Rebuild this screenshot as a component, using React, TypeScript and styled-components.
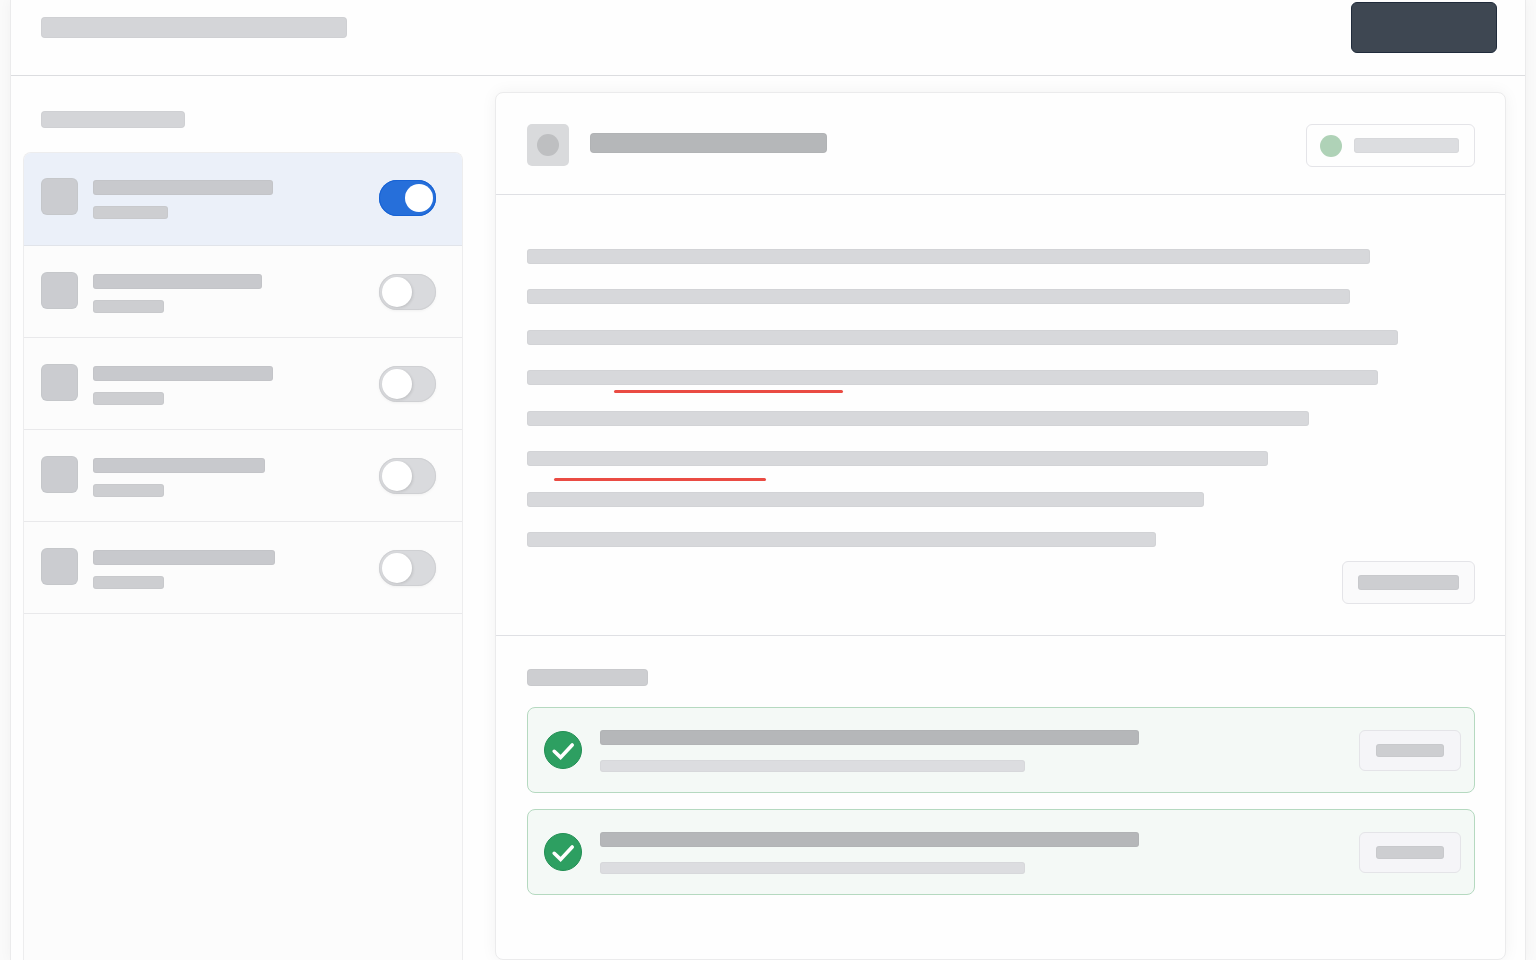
import React, { useState } from "react";
import styled, { createGlobalStyle } from "styled-components";

const GlobalStyle = createGlobalStyle`
  *, *::before, *::after { box-sizing: border-box; }
  body {
    margin: 0;
    background: #fafafa;
    font-family: "Inter", "Liberation Sans", sans-serif;
  }
`;

const tones = {
  light: "#dcdde0",
  line: "#d7d8db",
  base: "#d4d5d8",
  medium: "#cdced1",
  strong: "#c8c9cd",
  dark: "#b5b7b9",
};

const Bar = styled.span<{ $w: number; $h: number; $tone?: keyof typeof tones }>`
  display: block;
  flex: none;
  width: ${(p) => p.$w}px;
  max-width: 100%;
  height: ${(p) => p.$h}px;
  border-radius: ${(p) => (p.$h > 16 ? 4 : 3)}px;
  background: ${(p) => tones[p.$tone ?? "base"]};
  box-shadow: inset 0 0 0 1px rgba(60, 64, 72, 0.03);
`;

const Frame = styled.div`
  display: flex;
  flex-direction: column;
  min-height: 100vh;
  margin: 0 10px;
  border: solid #ebebec;
  border-width: 0 1px;
  background: #fefefe;
  box-shadow: 0 0 12px rgba(0, 0, 0, 0.04);
`;

const TopBar = styled.header`
  display: flex;
  align-items: center;
  justify-content: space-between;
  padding: 2px 28px 22px 30px;
  border-bottom: 1px solid #dcdde0;
`;

const PrimaryButton = styled.button`
  width: 146px;
  height: 51px;
  border: 1px solid #202b3b;
  border-radius: 6px;
  background: #3e4752;
  cursor: pointer;
`;

const Content = styled.div`
  flex: 1;
  display: grid;
  grid-template-columns: 440px minmax(0, 1fr);
  gap: 32px;
  padding: 0 19px 0 12px;
`;

const Sidebar = styled.aside`
  display: flex;
  flex-direction: column;
`;

const SidebarTitle = styled.div`
  padding: 35px 18px 24px;
`;

const List = styled.ul`
  flex: 1;
  margin: 0;
  padding: 0;
  list-style: none;
  border: 1px solid #ededee;
  border-bottom: 0;
  border-radius: 8px 8px 0 0;
  background: #fcfcfc;
  overflow: hidden;
`;

const Row = styled.li<{ $active?: boolean }>`
  display: flex;
  align-items: flex-start;
  gap: 15px;
  padding: ${(p) => (p.$active ? 25 : 26)}px 26px ${(p) => (p.$active ? 26 : 24)}px 17px;
  border-bottom: 1px solid ${(p) => (p.$active ? "#e1e4ea" : "#e9e9eb")};
  background: ${(p) => (p.$active ? "#ebf0f9" : "transparent")};
`;

const RowIcon = styled.span`
  flex: none;
  width: 37px;
  height: 37px;
  border-radius: 6px;
  background: #cbccd0;
  box-shadow: inset 0 0 0 1px rgba(60, 64, 72, 0.04);
`;

const RowText = styled.div`
  flex: 1;
  display: grid;
  gap: 11px;
  padding-top: 2px;
`;

const Toggle = styled.input`
  appearance: none;
  flex: none;
  width: 57px;
  height: 36px;
  margin: 2px 0 0;
  padding: 3px;
  border-radius: 18px;
  background: #d9dadd;
  box-shadow: inset 0 0 0 1px #cfd0d3, 0 1px 3px rgba(0, 0, 0, 0.05);
  cursor: pointer;

  &::before {
    content: "";
    display: block;
    width: 30px;
    height: 30px;
    border-radius: 50%;
    background: #fff;
    box-shadow: 1px 1px 3px rgba(0, 0, 0, 0.12);
  }

  &:checked {
    padding: 4px;
    background: #266fda;
    box-shadow: inset 0 0 0 1px #1762d4;
  }

  &:checked::before {
    width: 28px;
    height: 28px;
    margin-left: 22px;
    box-shadow: none;
  }
`;

const Panel = styled.main`
  display: flex;
  flex-direction: column;
  margin-top: 16px;
  border: 1px solid #ebebec;
  border-radius: 8px;
  background: #fefefe;
  box-shadow: 0 0 16px rgba(0, 0, 0, 0.05);
`;

const PanelHeader = styled.div`
  display: flex;
  align-items: flex-start;
  gap: 21px;
  padding: 31px 30px 27px 31px;
  border-bottom: 1px solid #dfe0e4;
`;

const Avatar = styled.span`
  display: grid;
  place-items: center;
  flex: none;
  width: 42px;
  height: 42px;
  border-radius: 5px;
  background: #d9dadc;

  &::before {
    content: "";
    width: 22px;
    height: 22px;
    border-radius: 50%;
    background: #bebfc1;
  }
`;

const PanelTitle = styled.div`
  flex: 1;
  padding-top: 9px;
`;

const Status = styled.div`
  display: flex;
  align-items: center;
  gap: 12px;
  height: 43px;
  padding: 0 15px 0 13px;
  border: 1px solid #e4e4e8;
  border-radius: 6px;
`;

const Dot = styled.span`
  width: 22px;
  height: 22px;
  border-radius: 50%;
  background: #afd2b7;
`;

const Editor = styled.section`
  display: flex;
  flex-direction: column;
  padding: 54px 30px 31px 31px;
  border-bottom: 1px solid #dfe0e4;
`;

const Lines = styled.div`
  display: flex;
  flex-direction: column;
  justify-content: space-between;
  min-height: 298px;
`;

const Line = styled.div`
  position: relative;
`;

const Underline = styled.span<{ $x: number; $y: number; $w: number }>`
  position: absolute;
  left: ${(p) => p.$x}px;
  top: ${(p) => p.$y}px;
  width: ${(p) => p.$w}px;
  height: 3px;
  border-radius: 2px;
  background: #ea4b43;
`;

const GhostButton = styled.button<{ $small?: boolean }>`
  display: flex;
  align-items: center;
  justify-content: center;
  flex: none;
  align-self: ${(p) => (p.$small ? "center" : "flex-end")};
  height: ${(p) => (p.$small ? 41 : 43)}px;
  margin-top: ${(p) => (p.$small ? 0 : 14)}px;
  padding: 0 ${(p) => (p.$small ? 16 : 15)}px;
  border: 1px solid #e4e4e8;
  border-radius: 6px;
  background: ${(p) => (p.$small ? "#f5f5f8" : "#fafafb")};
  cursor: pointer;
`;

const Results = styled.section`
  display: flex;
  flex-direction: column;
  gap: 16px;
  padding: 33px 30px 64px 31px;
`;

const ResultsTitle = styled.div`
  padding-bottom: 5px;
`;

const Card = styled.article`
  display: flex;
  align-items: center;
  gap: 18px;
  height: 86px;
  padding: 0 13px 0 16px;
  border: 1px solid #b5d9c0;
  border-radius: 8px;
  background: #f4f9f6;
`;

const CardText = styled.div`
  flex: 1;
  min-width: 0;
  display: grid;
  gap: 15px;
  margin-top: 2px;
`;

const CheckIcon = () => (
  <svg width="38" height="38" viewBox="0 0 38 38" aria-hidden="true">
    <circle cx="19" cy="19" r="18.5" fill="#2d9f61" stroke="#218f53" />
    <path
      d="M10.2 20.3 L16.6 26.4 L28.2 14"
      fill="none"
      stroke="#fff"
      strokeWidth="3.6"
      strokeLinecap="round"
      strokeLinejoin="miter"
    />
  </svg>
);

const rows = [
  { title: 180, sub: 75, on: true },
  { title: 169, sub: 71, on: false },
  { title: 180, sub: 71, on: false },
  { title: 172, sub: 71, on: false },
  { title: 182, sub: 71, on: false },
];

const lines: { w: number; mark?: { x: number; y: number; w: number } }[] = [
  { w: 843 },
  { w: 823 },
  { w: 871 },
  { w: 851, mark: { x: 87, y: 20, w: 229 } },
  { w: 782 },
  { w: 741, mark: { x: 27, y: 27, w: 212 } },
  { w: 677 },
  { w: 629 },
];

export default function App() {
  const [enabled, setEnabled] = useState(rows.map((r) => r.on));
  const flip = (i: number) =>
    setEnabled((prev) => prev.map((v, n) => (n === i ? !v : v)));

  return (
    <>
      <GlobalStyle />
      <Frame>
        <TopBar>
          <Bar $w={306} $h={21} />
          <PrimaryButton type="button" aria-label="Primary action" />
        </TopBar>
        <Content>
          <Sidebar>
            <SidebarTitle>
              <Bar $w={144} $h={17} />
            </SidebarTitle>
            <List>
              {rows.map((row, i) => (
                <Row key={i} $active={i === 0}>
                  <RowIcon />
                  <RowText>
                    <Bar $w={row.title} $h={15} $tone="strong" />
                    <Bar $w={row.sub} $h={13} $tone="medium" />
                  </RowText>
                  <Toggle
                    type="checkbox"
                    role="switch"
                    aria-label={`Option ${i + 1}`}
                    checked={enabled[i]}
                    onChange={() => flip(i)}
                  />
                </Row>
              ))}
            </List>
          </Sidebar>
          <Panel>
            <PanelHeader>
              <Avatar />
              <PanelTitle>
                <Bar $w={237} $h={20} $tone="dark" />
              </PanelTitle>
              <Status>
                <Dot />
                <Bar $w={105} $h={15} $tone="light" />
              </Status>
            </PanelHeader>
            <Editor>
              <Lines>
                {lines.map((line, i) => (
                  <Line key={i}>
                    <Bar $w={line.w} $h={15} $tone="line" />
                    {line.mark && (
                      <Underline $x={line.mark.x} $y={line.mark.y} $w={line.mark.w} />
                    )}
                  </Line>
                ))}
              </Lines>
              <GhostButton type="button" aria-label="Check text">
                <Bar $w={101} $h={15} $tone="medium" />
              </GhostButton>
            </Editor>
            <Results>
              <ResultsTitle>
                <Bar $w={121} $h={17} $tone="medium" />
              </ResultsTitle>
              {[1, 2].map((n) => (
                <Card key={n}>
                  <CheckIcon />
                  <CardText>
                    <Bar $w={539} $h={15} $tone="dark" />
                    <Bar $w={425} $h={12} $tone="light" />
                  </CardText>
                  <GhostButton type="button" $small aria-label={`Apply result ${n}`}>
                    <Bar $w={68} $h={13} $tone="medium" />
                  </GhostButton>
                </Card>
              ))}
            </Results>
          </Panel>
        </Content>
      </Frame>
    </>
  );
}
